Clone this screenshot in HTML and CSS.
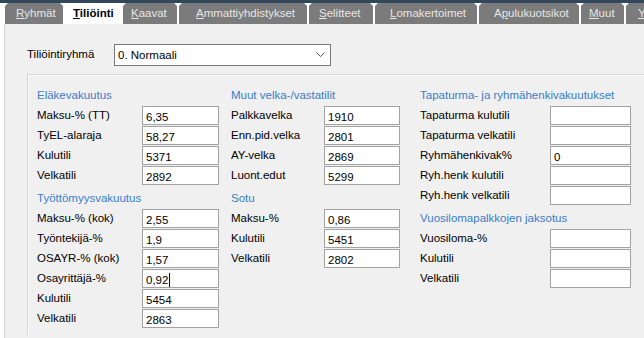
FILE: index.html
```html
<!DOCTYPE html>
<html lang="fi">
<head>
<meta charset="utf-8">
<title>Tiliöinti</title>
<link rel="stylesheet" href="styles.css">
</head>
<body>
<div class="topbar"></div>
<div class="tabs">
  <div class="tab t1"><u>R</u>yhmät</div>
  <div class="tab t2 active"><u>T</u>iliöinti</div>
  <div class="tab t3"><u>K</u>aavat</div>
  <div class="tab t4"><u>A</u>mmattiyhdistykset</div>
  <div class="tab t5"><u>S</u>elitteet</div>
  <div class="tab t6"><u>L</u>omakertoimet</div>
  <div class="tab t7">A<u>p</u>ulukuotsikot</div>
  <div class="tab t8"><u>M</u>uut</div>
  <div class="tab t9"><u>Y</u></div>
</div>
<div class="content">
  <div class="group-row">
    <span class="group-label">Tiliöintiryhmä</span>
    <div class="combo">
      <span>0. Normaali</span>
      <svg class="chev" width="9" height="6" viewBox="0 0 9 6"><path d="M0.5 0.5 L4.5 4.5 L8.5 0.5" fill="none" stroke="#555" stroke-width="1"/></svg>
    </div>
  </div>
  <div class="panel">
    <div class="col c1">
      <div class="sec">
        <div class="head">Eläkevakuutus</div>
        <div class="row"><span class="lbl">Maksu-% (TT)</span><div class="field">6,35</div></div>
        <div class="row"><span class="lbl">TyEL-alaraja</span><div class="field">58,27</div></div>
        <div class="row"><span class="lbl">Kulutili</span><div class="field">5371</div></div>
        <div class="row"><span class="lbl">Velkatili</span><div class="field">2892</div></div>
      </div>
      <div class="sec">
        <div class="head">Työttömyysvakuutus</div>
        <div class="row"><span class="lbl">Maksu-% (kok)</span><div class="field">2,55</div></div>
        <div class="row"><span class="lbl">Työntekijä-%</span><div class="field">1,9</div></div>
        <div class="row"><span class="lbl">OSAYR-% (kok)</span><div class="field">1,57</div></div>
        <div class="row"><span class="lbl">Osayrittäjä-%</span><div class="field">0,92<span class="caret"></span></div></div>
        <div class="row"><span class="lbl">Kulutili</span><div class="field">5454</div></div>
        <div class="row"><span class="lbl">Velkatili</span><div class="field">2863</div></div>
      </div>
    </div>
    <div class="col c2">
      <div class="sec">
        <div class="head">Muut velka-/vastatilit</div>
        <div class="row"><span class="lbl">Palkkavelka</span><div class="field">1910</div></div>
        <div class="row"><span class="lbl">Enn.pid.velka</span><div class="field">2801</div></div>
        <div class="row"><span class="lbl">AY-velka</span><div class="field">2869</div></div>
        <div class="row"><span class="lbl">Luont.edut</span><div class="field">5299</div></div>
      </div>
      <div class="sec">
        <div class="head">Sotu</div>
        <div class="row"><span class="lbl">Maksu-%</span><div class="field">0,86</div></div>
        <div class="row"><span class="lbl">Kulutili</span><div class="field">5451</div></div>
        <div class="row"><span class="lbl">Velkatili</span><div class="field">2802</div></div>
      </div>
    </div>
    <div class="col c3">
      <div class="sec">
        <div class="head">Tapaturma- ja ryhmähenkivakuutukset</div>
        <div class="row"><span class="lbl">Tapaturma kulutili</span><div class="field"></div></div>
        <div class="row"><span class="lbl">Tapaturma velkatili</span><div class="field"></div></div>
        <div class="row"><span class="lbl">Ryhmähenkivak%</span><div class="field">0</div></div>
        <div class="row"><span class="lbl">Ryh.henk kulutili</span><div class="field"></div></div>
        <div class="row"><span class="lbl">Ryh.henk velkatili</span><div class="field"></div></div>
      </div>
      <div class="sec">
        <div class="head">Vuosilomapalkkojen jaksotus</div>
        <div class="row"><span class="lbl">Vuosiloma-%</span><div class="field"></div></div>
        <div class="row"><span class="lbl">Kulutili</span><div class="field"></div></div>
        <div class="row"><span class="lbl">Velkatili</span><div class="field"></div></div>
      </div>
    </div>
  </div>
</div>
</body>
</html>
```
FILE: styles.css
```css
html, body {
  margin: 0;
  padding: 0;
  background: #ffffff;
  font-family: "Liberation Sans", Arial, sans-serif;
  font-size: 11.5px;
  color: #000;
  overflow: hidden;
}
.topbar {
  height: 3px;
  background: #34465a;
}
.tabs {
  display: flex;
  height: 21px;
  padding-left: 5px;
  gap: 2px;
  background: #ffffff;
  overflow: hidden;
}
.tab {
  flex: none;
  box-sizing: border-box;
  height: 21px;
  padding-top: 4px;
  background: #7b7b7b;
  color: #e6e6e6;
  font-size: 11.5px;
  white-space: nowrap;
  overflow: hidden;
  clip-path: polygon(3px 0, calc(100% - 3px) 0, 100% 3px, 100% 100%, 0 100%, 0 3px);
}
.tab.active {
  background: #ffffff;
  color: #000;
  font-weight: bold;
}
.t1 { width: 58px; padding-left: 11px; }
.t2 { width: 56px; padding-left: 8px; }
.t3 { width: 54px; padding-left: 8px; }
.t4 { width: 128px; padding-left: 17px; }
.t5 { width: 64px; padding-left: 10px; }
.t6 { width: 102px; padding-left: 15px; }
.t7 { width: 100px; padding-left: 15px; }
.t8 { width: 43px; padding-left: 8px; }
.t9 { width: 24px; padding-left: 12px; }

.content {
  margin-left: 4px;
  border-left: 1px solid #d2d2d2;
  background: #f0f0f0;
  height: 314px;
  padding: 20px 0 0 22px;
  box-sizing: border-box;
}
.group-row {
  display: flex;
  align-items: center;
  height: 22px;
}
.group-label {
  width: 87px;
  position: relative;
  top: -1px;
}
.combo {
  box-sizing: border-box;
  width: 217px;
  height: 22px;
  background: #fff;
  border: 1px solid #7a7a7a;
  display: flex;
  align-items: center;
  justify-content: space-between;
  padding: 0 5px 0 3px;
}
.panel {
  margin-top: 8px;
  border-top: 1px solid #d6d6d6;
  border-left: 1px solid #d6d6d6;
  box-shadow: inset 1px 1px 0 #fbfbfb;
  padding: 11px 0 0 9px;
  display: flex;
  height: 260px;
  box-sizing: border-box;
}
.col { display: flex; flex-direction: column; gap: 3px; }
.c1 { width: 182px; margin-right: 12px; }
.c2 { width: 169px; margin-right: 20px; }
.c3 { width: 211px; }
.c1 .lbl { width: 105px; }
.c2 .lbl { width: 93px; }
.c3 .lbl { width: 130px; }
.c1 .field { width: 77px; }
.c2 .field { width: 77px; }
.c3 .field { width: 81px; }
.head {
  height: 20px;
  line-height: 19px;
  color: #3a7dc9;
}
.row {
  display: flex;
  align-items: center;
  height: 20px;
}
.lbl {
  flex: none;
  position: relative;
  top: -1px;
  white-space: nowrap;
}
.field {
  box-sizing: border-box;
  height: 19px;
  margin-bottom: 1px;
  background: #fff;
  border: 1px solid #a2a2a2;
  padding: 2px 0 0 3px;
  display: flex;
  align-items: center;
  font-size: 11.5px;
}
.caret {
  display: inline-block;
  width: 1px;
  height: 14px;
  background: #000;
  margin-left: 1px;
}
```
